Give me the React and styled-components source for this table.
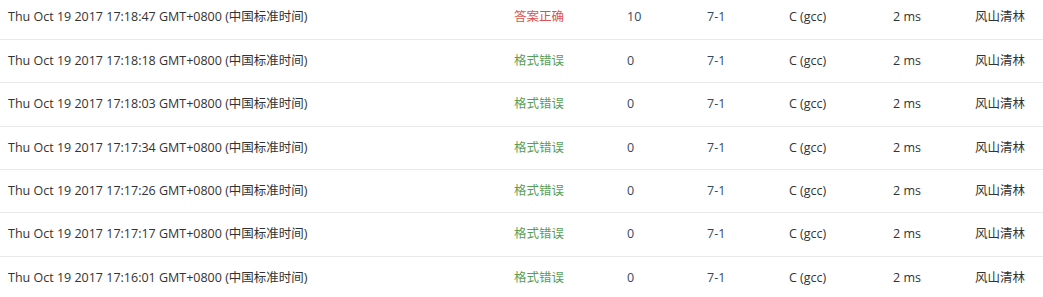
import React from 'react';
import styled, { createGlobalStyle } from 'styled-components';

const GlobalStyle = createGlobalStyle`
  html, body {
    margin: 0;
    padding: 0;
    background: #fff;
  }

  body {
    font-family: "Open Sans", "Noto Sans CJK SC", sans-serif;
    font-size: 12.5px;
    color: #333;
  }
`;

const Table = styled.div`
  width: 1043px;
  margin-top: -3.6px;
`;

const Row = styled.div`
  display: grid;
  grid-template-columns: 506px 113px 80px 82px 104px 82px 1fr;
  align-items: center;
  padding: 12px 0 12px 8px;
  line-height: 18.4px;
  border-bottom: 1px solid #e9e9e9;
  white-space: nowrap;
`;

const Cell = styled.div`
  color: ${(p) => p.color || '#333'};
`;

const Status = styled.div`
  color: ${(p) => (p.ok ? '#d9534f' : '#5a9e55')};
`;

const submissions = [
  { time: '17:18:47', ok: true, score: 10 },
  { time: '17:18:18', ok: false, score: 0 },
  { time: '17:18:03', ok: false, score: 0 },
  { time: '17:17:34', ok: false, score: 0 },
  { time: '17:17:26', ok: false, score: 0 },
  { time: '17:17:17', ok: false, score: 0 },
  { time: '17:16:01', ok: false, score: 0 },
];

export default function App() {
  return (
    <>
      <GlobalStyle />
      <Table>
        {submissions.map((s) => (
          <Row key={s.time}>
            <Cell>Thu Oct 19 2017 {s.time} GMT+0800 (中国标准时间)</Cell>
            <Status ok={s.ok}>{s.ok ? '答案正确' : '格式错误'}</Status>
            <Cell color="#34495e">{s.score}</Cell>
            <Cell color="#34495e">7-1</Cell>
            <Cell>C (gcc)</Cell>
            <Cell>2 ms</Cell>
            <Cell>风山清林</Cell>
          </Row>
        ))}
      </Table>
    </>
  );
}
